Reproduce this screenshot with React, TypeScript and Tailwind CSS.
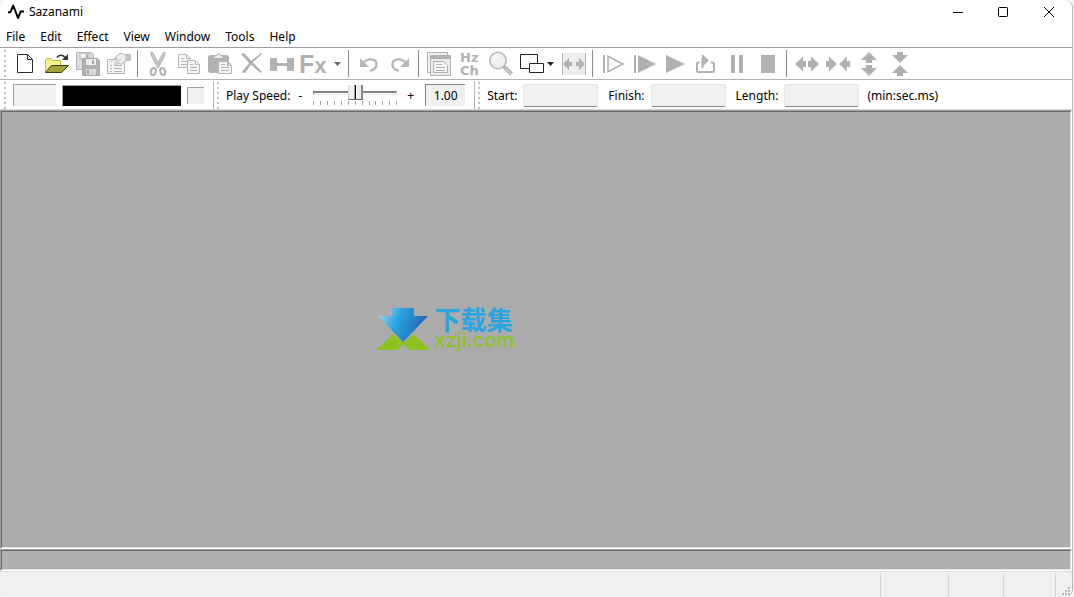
import type { ReactNode } from "react";

type ToolProps = {
  label: string;
  children: ReactNode;
};

const menus = ["File", "Edit", "Effect", "View", "Window", "Tools", "Help"];
const ticks = Array.from({ length: 13 }, (_, i) => i);

function Tool({ label, children }: ToolProps) {
  return (
    <button type="button" aria-label={label} className="h-[31px] w-[31px] shrink-0">
      <svg viewBox="0 0 31 31" className="block h-[31px] w-[31px]" fill="none">
        {children}
      </svg>
    </button>
  );
}

function Caret({ label, className }: { label: string; className: string }) {
  return (
    <button type="button" aria-label={label} className={className}>
      <svg viewBox="0 0 7 4" className="h-1 w-[7px]">
        <path d="M0 0H7L3.5 4Z" fill="currentColor" />
      </svg>
    </button>
  );
}

function Separator() {
  return (
    <div className="flex h-[27px] w-2 shrink-0 pl-[3px]">
      <div className="w-px bg-[#8c8c8c]" />
    </div>
  );
}

function Grip() {
  return (
    <div className="flex w-[3px] shrink-0 flex-col gap-[3px] self-center">
      {[0, 1, 2, 3, 4, 5].map((dot) => (
        <div key={dot} className="h-0.5 w-0.5 bg-[#bdbdbd]" />
      ))}
    </div>
  );
}

function Divider() {
  return <div className="w-px shrink-0 self-stretch bg-[#b4b2b8]" />;
}

function TimeField({ id, label }: { id: string; label: string }) {
  return (
    <>
      <label htmlFor={id} className="shrink-0 pt-0.5 whitespace-nowrap">
        {label}
      </label>
      <input
        id={id}
        type="text"
        readOnly
        className="mr-2 ml-1.5 h-[23px] w-[75px] rounded-xs border border-[#e4e4e4] border-b-[#868686] bg-[#f0f0f0] px-1 outline-none"
      />
    </>
  );
}

function TitleBar() {
  return (
    <header className="flex h-[23px] shrink-0 items-center pl-2">
      <svg viewBox="0 0 16 16" className="h-4 w-4" fill="none">
        <path
          d="M0 8.2H2.4L5.3 1.5L10 14L12.6 7.6H16"
          stroke="#000"
          strokeWidth="2"
          strokeLinejoin="round"
        />
      </svg>
      <h1 className="ml-[5px] flex-1">Sazanami</h1>
      <button type="button" aria-label="Minimize" className="flex h-[22px] w-[45px] items-center justify-center">
        <svg viewBox="0 0 10 10" className="h-2.5 w-2.5" fill="none" stroke="#000">
          <path d="M0 5.5H10" />
        </svg>
      </button>
      <button type="button" aria-label="Maximize" className="flex h-[22px] w-[45px] items-center justify-center">
        <svg viewBox="0 0 10 10" className="h-2.5 w-2.5" fill="none" stroke="#000">
          <rect x="0.5" y="0.5" width="9" height="9" rx="0.8" />
        </svg>
      </button>
      <button type="button" aria-label="Close" className="flex h-[22px] w-[47px] items-center justify-center">
        <svg viewBox="0 0 10 10" className="h-2.5 w-2.5" fill="none" stroke="#000">
          <path d="M0 0L10 10M10 0L0 10" />
        </svg>
      </button>
    </header>
  );
}

function MenuBar() {
  return (
    <nav className="flex h-[25px] shrink-0 items-center gap-[3px] border-b border-[#9d9d9d] pt-1">
      {menus.map((menu) => (
        <button key={menu} type="button" className="px-1.5">
          {menu}
        </button>
      ))}
    </nav>
  );
}

function ToolBar() {
  return (
    <div className="flex h-8 shrink-0 items-center border-b border-[#b4b2b8] pl-1">
      <Grip />
      <div className="flex items-center pl-[3px]">
        <Tool label="New">
          <path d="M7.5 6.5H17.5L22.5 11.5V24.5H7.5ZM17.5 6.5V11.5H22.5" stroke="#2b2b2b" fill="#fff" />
        </Tool>
        <Tool label="Open">
          <path d="M4.5 24V11.5L6 10.5H10L11.5 12.5H19.5V17" fill="#f8f38c" stroke="#c9b93c" />
          <path d="M4.5 24.5L10.5 17.5H27.5L20.5 24.5Z" fill="#a3a23a" stroke="#3d3d12" />
          <path d="M16 9.5C18 6.5 22 6.5 24.5 10" stroke="#333" strokeWidth="1.6" />
          <path d="M27 6V12H21Z" fill="#333" />
        </Tool>
        <Tool label="Save all">
          <path d="M4.5 4.5H19.5L21.5 6.5V21.5H4.5Z" fill="#ddd" stroke="#b5b5b5" />
          <path d="M8 5H17V11H8Z" fill="#f2f2f2" stroke="#b5b5b5" />
          <path d="M14 6H16V10H14Z" fill="#b0b0b0" />
          <path d="M10.5 10.5H25.5L27.5 12.5V27.5H10.5Z" fill="#b0b0b0" stroke="#a8a8a8" />
          <path d="M14 11H24V17H14Z" fill="#eee" />
          <path d="M20 12H22V16H20Z" fill="#a8a8a8" />
          <path d="M14 21H24V27H14Z" fill="#d9d9d9" />
          <path d="M15 22H17V26H15Z" fill="#a0a0a0" />
        </Tool>
        <Tool label="Properties">
          <path d="M4.5 11.5H21.5V25.5H4.5Z" fill="#f3f3f3" stroke="#b5b5b5" />
          <path d="M7 17.5H9M11 17.5H19M7 20.5H9M11 20.5H19M7 23.5H9M11 23.5H19" stroke="#b5b5b5" />
          <path d="M11.5 10.5L15 6.5L19 5.5L23 7V13L18 16.5L16.5 15L12.5 16.5L11.5 15L15 11.5Z" fill="#eee" stroke="#b5b5b5" />
          <path d="M8 13.5L13 9.5M14 15L18 11" stroke="#b5b5b5" />
          <path d="M23 6H28V13H23Z" fill="#c0c0c0" />
        </Tool>
        <Separator />
        <Tool label="Cut">
          <path d="M9 4L11 5L17.5 18L15.5 19.5L9.5 8ZM23 4L21 5L14.5 18L16.5 19.5L22.5 8Z" fill="#c8c8c8" stroke="#b0b0b0" />
          <ellipse cx="11.3" cy="23.5" rx="2.4" ry="3.6" transform="rotate(20 11.3 23.5)" stroke="#b0b0b0" strokeWidth="2" />
          <ellipse cx="20.7" cy="23.5" rx="2.4" ry="3.6" transform="rotate(-20 20.7 23.5)" stroke="#b0b0b0" strokeWidth="2" />
        </Tool>
        <Tool label="Copy">
          <path d="M5.5 6.5H13.5L17.5 10.5V19.5H5.5ZM13.5 6.5V10.5H17.5" fill="#f3f3f3" stroke="#b5b5b5" />
          <path d="M8 10.5H11M8 13.5H14M8 16.5H14" stroke="#b5b5b5" />
          <path d="M14.5 12.5H22.5L26.5 16.5V25.5H14.5ZM22.5 12.5V16.5H26.5" fill="#f3f3f3" stroke="#b5b5b5" />
          <path d="M17 16.5H20M17 19.5H24M17 22.5H24" stroke="#b5b5b5" />
        </Tool>
        <Tool label="Paste">
          <rect x="4" y="7" width="21" height="18" rx="3" fill="#b2b2b2" />
          <path d="M9.5 10.5V8.5L12.5 7.5Q14.5 3.5 16.5 7.5L19.5 8.5V10.5Z" fill="#eee" stroke="#aaa" />
          <path d="M14.5 13.5H23.5L27.5 17.5V25.5H14.5ZM23.5 13.5V17.5H27.5" fill="#f3f3f3" stroke="#b5b5b5" />
          <path d="M17 16.5H21M17 19.5H25M17 22.5H25" stroke="#b5b5b5" />
        </Tool>
        <Tool label="Delete">
          <path d="M6 6L9 5L17 13.5L27 24L25.5 25L15.5 16.5Z" fill="#b0b0b0" />
          <path d="M26 5L27 6L17 15L10 25L6.5 24.5L15 14Z" fill="#b0b0b0" />
        </Tool>
        <Tool label="Trim">
          <path d="M4 10H11V15H21V10H28V23H21V18H11V23H4Z" fill="#b2b2b2" />
        </Tool>
        <Tool label="Effects">
          <text x="2" y="25" fontFamily="Liberation Sans, sans-serif" fontWeight="700" fontSize="25" fill="#b0b0b0">
            F<tspan fontSize="22">x</tspan>
          </text>
        </Tool>
        <Caret label="Effect list" className="flex h-[31px] w-[17px] items-center justify-center pl-px text-[#666]" />
        <Separator />
        <Tool label="Undo">
          <path d="M10 15C14 10 23 10 23.5 16C23.8 20 21 22.5 17 22.5" stroke="#b8b8b8" strokeWidth="2.4" />
          <path d="M7 10V19H16Z" fill="#b8b8b8" />
        </Tool>
        <Tool label="Redo">
          <path d="M22 15C18 10 9 10 8.5 16C8.2 20 11 22.5 15 22.5" stroke="#b8b8b8" strokeWidth="2.4" />
          <path d="M25 10V19H16Z" fill="#b8b8b8" />
        </Tool>
        <Separator />
        <Tool label="Cascade">
          <path d="M4.5 4.5H24.5V24.5H4.5Z" fill="#f0f0f0" stroke="#b0b0b0" />
          <path d="M7.5 7.5H27.5V27.5H7.5Z" fill="#ededed" stroke="#b0b0b0" />
          <path d="M8 8H27V11H8Z" fill="#b0b0b0" />
          <path d="M10.5 13.5H20.5L24.5 17.5V24.5H10.5Z" fill="#f5f5f5" stroke="#b0b0b0" />
          <path d="M13 16.5H19M13 19.5H22M13 22.5H22" stroke="#b0b0b0" />
        </Tool>
        <Tool label="Frequency and channels">
          <text x="6" y="14" fontFamily="DejaVu Sans, sans-serif" fontWeight="700" fontSize="13" fill="#b0b0b0">Hz</text>
          <text x="6" y="27" fontFamily="DejaVu Sans, sans-serif" fontWeight="700" fontSize="13" fill="#b0b0b0">Ch</text>
        </Tool>
        <Tool label="Zoom">
          <path d="M18 18L26.5 26" stroke="#b0b0b0" strokeWidth="4" />
          <path d="M20 20L26 26" stroke="#c8c8c8" strokeWidth="2" />
          <circle cx="13" cy="12.5" r="8.2" fill="#efefef" stroke="#b8b8b8" strokeWidth="1.6" />
          <path d="M8.5 12C9 9 11 8 13.5 8" stroke="#fff" strokeWidth="1.6" />
        </Tool>
        <Tool label="Windows">
          <path d="M4.5 6.5H21.5V20.5H4.5Z" fill="#fff" stroke="#222" />
          <path d="M13.5 15.5H27.5V24.5H13.5Z" fill="#fff" stroke="#222" />
        </Tool>
        <Caret label="Window list" className="flex h-[31px] w-[11px] items-center text-[#222]" />
        <Tool label="Fit width">
          <path d="M4 5H28V27H4Z" fill="#ededed" />
          <path d="M4.5 5V27M27.5 5V27" stroke="#b5b5b5" />
          <path d="M5 16L11 10V14H14V18H11V22ZM27 16L21 10V14H18V18H21V22Z" fill="#b0b0b0" />
        </Tool>
        <Separator />
        <Tool label="Play from start">
          <path d="M7 7V25" stroke="#b0b0b0" strokeWidth="2" />
          <path d="M11 8.3L26 16L11 23.7Z" stroke="#b0b0b0" strokeWidth="1.6" />
        </Tool>
        <Tool label="Play from cursor">
          <path d="M7 7V25" stroke="#b0b0b0" strokeWidth="2" />
          <path d="M10 7L28 16L10 25Z" fill="#b0b0b0" />
        </Tool>
        <Tool label="Play">
          <path d="M7 7L26 16L7 25Z" fill="#b0b0b0" />
        </Tool>
        <Tool label="Loop">
          <path d="M9.5 14.5H8.5Q7 14.5 7 16V22.5Q7 24 8.5 24H22.5Q24 24 24 22.5V16Q24 14.5 22.5 14.5H20.5" stroke="#b0b0b0" strokeWidth="2" />
          <path d="M12.5 20V11H16" stroke="#b0b0b0" strokeWidth="2" />
          <path d="M12 6L19 12.5L12 19Z" fill="#b0b0b0" />
        </Tool>
        <Tool label="Pause">
          <path d="M10 7H14V25H10ZM18 7H22V25H18Z" fill="#b0b0b0" />
        </Tool>
        <Tool label="Stop">
          <path d="M9 7H23V25H9Z" fill="#b0b0b0" />
        </Tool>
        <Separator />
        <Tool label="Expand horizontally">
          <path d="M4 16L12 8.5V13H15V19H12V23.5ZM28 16L20 8.5V13H17V19H20V23.5Z" fill="#b0b0b0" />
        </Tool>
        <Tool label="Shrink horizontally">
          <path d="M15 16L7 8.5V13H4V19H7V23.5ZM17 16L25 8.5V13H28V19H25V23.5Z" fill="#b0b0b0" />
        </Tool>
        <Tool label="Expand vertically">
          <path d="M16 4L24 12H19V15H13V12H8ZM16 28L24 20H19V17H13V20H8Z" fill="#b0b0b0" />
        </Tool>
        <Tool label="Shrink vertically">
          <path d="M16 15L24 7H19V4H13V7H8ZM16 17L24 25H19V28H13V25H8Z" fill="#b0b0b0" />
        </Tool>
      </div>
    </div>
  );
}

function TransportBar() {
  return (
    <div className="flex h-[30px] shrink-0 items-center border-b border-[#d4d4d4] pt-px pl-1">
      <Grip />
      <div className="ml-1.5 h-[22px] w-[43px] border-t border-l border-[#a0a0a0] bg-[#f0f0f0]" />
      <div className="ml-1.5 h-[21px] w-[119px] border-t border-l border-[#a0a0a0] bg-black" />
      <div className="mr-[9px] ml-1.5 h-[17px] w-[17px] border-t border-l border-[#a0a0a0] bg-[#f0f0f0]" />
      <Divider />
      <div className="w-[3px]" />
      <Grip />
      <label htmlFor="speed" className="ml-1.5 shrink-0 pt-0.5 whitespace-nowrap">
        Play Speed:
      </label>
      <span className="ml-2 pt-0.5">-</span>
      <div className="ml-[11px] flex w-[84px] shrink-0 flex-col">
        <input
          id="speed"
          type="range"
          min={0}
          max={12}
          defaultValue={6}
          className="h-4 w-full appearance-none bg-transparent [&::-webkit-slider-runnable-track]:h-1 [&::-webkit-slider-runnable-track]:border [&::-webkit-slider-runnable-track]:border-t-2 [&::-webkit-slider-runnable-track]:border-t-[#808080] [&::-webkit-slider-runnable-track]:border-r-[#e3e3e3] [&::-webkit-slider-runnable-track]:border-b-[#e3e3e3] [&::-webkit-slider-runnable-track]:border-l-[#808080] [&::-webkit-slider-thumb]:-mt-2 [&::-webkit-slider-thumb]:h-[15px] [&::-webkit-slider-thumb]:w-[15px] [&::-webkit-slider-thumb]:appearance-none [&::-webkit-slider-thumb]:border-r-2 [&::-webkit-slider-thumb]:border-b [&::-webkit-slider-thumb]:border-l [&::-webkit-slider-thumb]:border-r-[#8a8a8a] [&::-webkit-slider-thumb]:border-b-[#696969] [&::-webkit-slider-thumb]:border-l-[#d0d0d0] [&::-webkit-slider-thumb]:bg-[linear-gradient(90deg,#f0f0f0_5px,#a0a0a0_5px,#a0a0a0_6px,#000_6px,#000_7px,#fff_7px,#fff_8px,#ebebeb_8px)]"
        />
        <div className="flex h-1 justify-between">
          {ticks.map((tick) => (
            <div key={tick} className="h-1 w-px bg-[#a0a0a0]" />
          ))}
        </div>
      </div>
      <span className="ml-2.5 pt-0.5">+</span>
      <output htmlFor="speed" className="mr-[9px] ml-[11px] flex h-[22px] w-10 shrink-0 items-center justify-center border-t border-l border-[#868686] bg-[#f0f0f0] pt-px">
        1.00
      </output>
      <Divider />
      <div className="w-[3px]" />
      <Grip />
      <div className="ml-1.5 flex items-center">
        <TimeField id="start" label="Start:" />
        <div className="w-0.5" />
        <TimeField id="finish" label="Finish:" />
        <div className="w-0.5" />
        <TimeField id="length" label="Length:" />
        <span className="pt-0.5 whitespace-nowrap">(min:sec.ms)</span>
      </div>
    </div>
  );
}

function Logo() {
  return (
    <div className="flex items-center gap-1">
      <svg viewBox="0 0 54 43" className="h-[43px] w-[54px]">
        <defs>
          <linearGradient id="arrow" x1="0" y1="0" x2="1" y2="0.3">
            <stop offset="0" stopColor="#a5dcf5" />
            <stop offset="0.45" stopColor="#2aa5e0" />
            <stop offset="1" stopColor="#2264b4" />
          </linearGradient>
        </defs>
        <path d="M0 42L17 26L27 35L37 26L54 42H33L27 36L21 42Z" fill="#8dc21f" />
        <path d="M16 0H38V8H52L27 34L2 8H16Z" fill="url(#arrow)" />
      </svg>
      <div className="flex flex-col pb-1">
        <span className="font-['Noto_Sans_CJK_SC',sans-serif] text-[26px] leading-6 font-bold text-[#2ba5e0]">下载集</span>
        <span className="font-[Inter,sans-serif] text-xl leading-[18px] font-medium text-[#8dc21f]">xzji.com</span>
      </div>
    </div>
  );
}

function StatusBar() {
  return (
    <footer className="flex h-[26px] shrink-0 items-stretch border-t border-[#dcdcdc] bg-[#f0f0f0] pt-px">
      <div className="flex-1" />
      <div className="w-[68px] border-l border-[#d7d7d7]" />
      <div className="w-[55px] border-l border-[#d7d7d7]" />
      <div className="w-[52px] border-l border-[#d7d7d7]" />
      <div className="flex w-[17px] items-end justify-end border-l border-[#d7d7d7] pr-0.5 pb-0.5">
        <svg viewBox="0 0 8 8" className="h-2 w-2" fill="#b8b8b8">
          <path d="M6 0H8V2H6ZM3 3H5V5H3ZM6 3H8V5H6ZM0 6H2V8H0ZM3 6H5V8H3ZM6 6H8V8H6Z" />
        </svg>
      </div>
    </footer>
  );
}

export default function App() {
  return (
    <div className="h-screen w-full bg-[#f3f3f3] pr-px font-['Noto_Sans','Open_Sans',sans-serif] text-xs leading-4 text-black">
      <div className="flex h-full flex-col overflow-hidden rounded-lg border-r border-[#b4b4b4] bg-white">
        <TitleBar />
        <MenuBar />
        <ToolBar />
        <TransportBar />
        <div className="flex flex-1 flex-col border border-t-[#a0a0a0] border-r-white border-b-white border-l-[#a0a0a0]">
          <main className="flex flex-1 items-center border border-t-[#696969] border-r-[#e3e3e3] border-b-[#e3e3e3] border-l-[#696969] bg-[#ababab] px-0.5">
            <div className="pl-[35%]">
              <Logo />
            </div>
          </main>
        </div>
        <div className="flex h-[22px] shrink-0 flex-col border border-t-[#a0a0a0] border-r-white border-b-white border-l-[#a0a0a0]">
          <div className="flex-1 border border-t-[#696969] border-r-[#e3e3e3] border-b-[#e3e3e3] border-l-[#696969] bg-[#b0b0b0]" />
        </div>
        <StatusBar />
      </div>
    </div>
  );
}
